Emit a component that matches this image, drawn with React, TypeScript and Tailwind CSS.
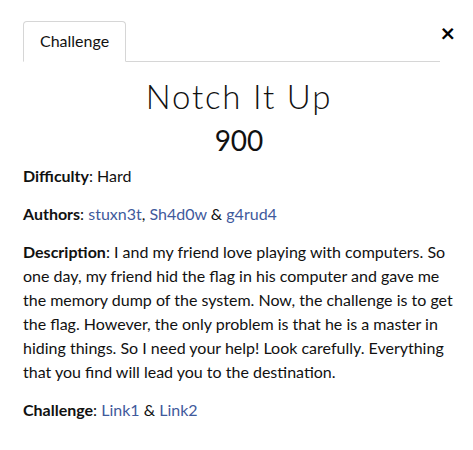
import React from "react";

const Link: React.FC<{ children: React.ReactNode }> = ({ children }) => (
  <a href="#" className="text-[#3f5a9c] no-underline">
    {children}
  </a>
);

export default function App() {
  return (
    <div
      className="min-h-[450px] w-[473px] bg-white pl-[23px] pr-[18px] pt-[21px] text-[#111]"
      style={{ fontFamily: "Lato, 'Open Sans', sans-serif" }}
    >
      <div className="flex items-start">
        <ul className="flex w-[420px] list-none border-b border-[#d6d6d6]">
          <li className="-mb-px rounded-t-[4px] border border-[#d6d6d6] border-b-white bg-white px-[16px] pb-[10px] pt-[9px] text-[16px] leading-[20px]">
            Challenge
          </li>
        </ul>
        <button
          type="button"
          className="ml-auto mt-[1px] text-[25px] font-bold leading-[20px] text-black"
        >
          ×
        </button>
      </div>

      <div className="mt-[14px] text-center">
        <h1 className="text-[33px] font-light leading-[40px] tracking-[1.8px]">
          Notch It Up
        </h1>
        <h2 className="mt-[6px] text-[28px] leading-[36px]">900</h2>
      </div>

      <div className="mt-[6px] text-[16px] leading-[24px]">
        <p className="mb-[14px]">
          <strong>Difficulty</strong>: Hard
        </p>
        <p className="mb-[14px]">
          <strong>Authors</strong>: <Link>stuxn3t</Link>, <Link>Sh4d0w</Link> &amp;{" "}
          <Link>g4rud4</Link>
        </p>
        <p className="mb-[14px]">
          <strong>Description</strong>: I and my friend love playing with computers. So one
          day, my friend hid the flag in his computer and gave me the memory dump of the
          system. Now, the challenge is to get the flag. However, the only problem is that
          he is a master in hiding things. So I need your help! Look carefully. Everything
          that you find will lead you to the destination.
        </p>
        <p>
          <strong>Challenge</strong>: <Link>Link1</Link> &amp; <Link>Link2</Link>
        </p>
      </div>
    </div>
  );
}
